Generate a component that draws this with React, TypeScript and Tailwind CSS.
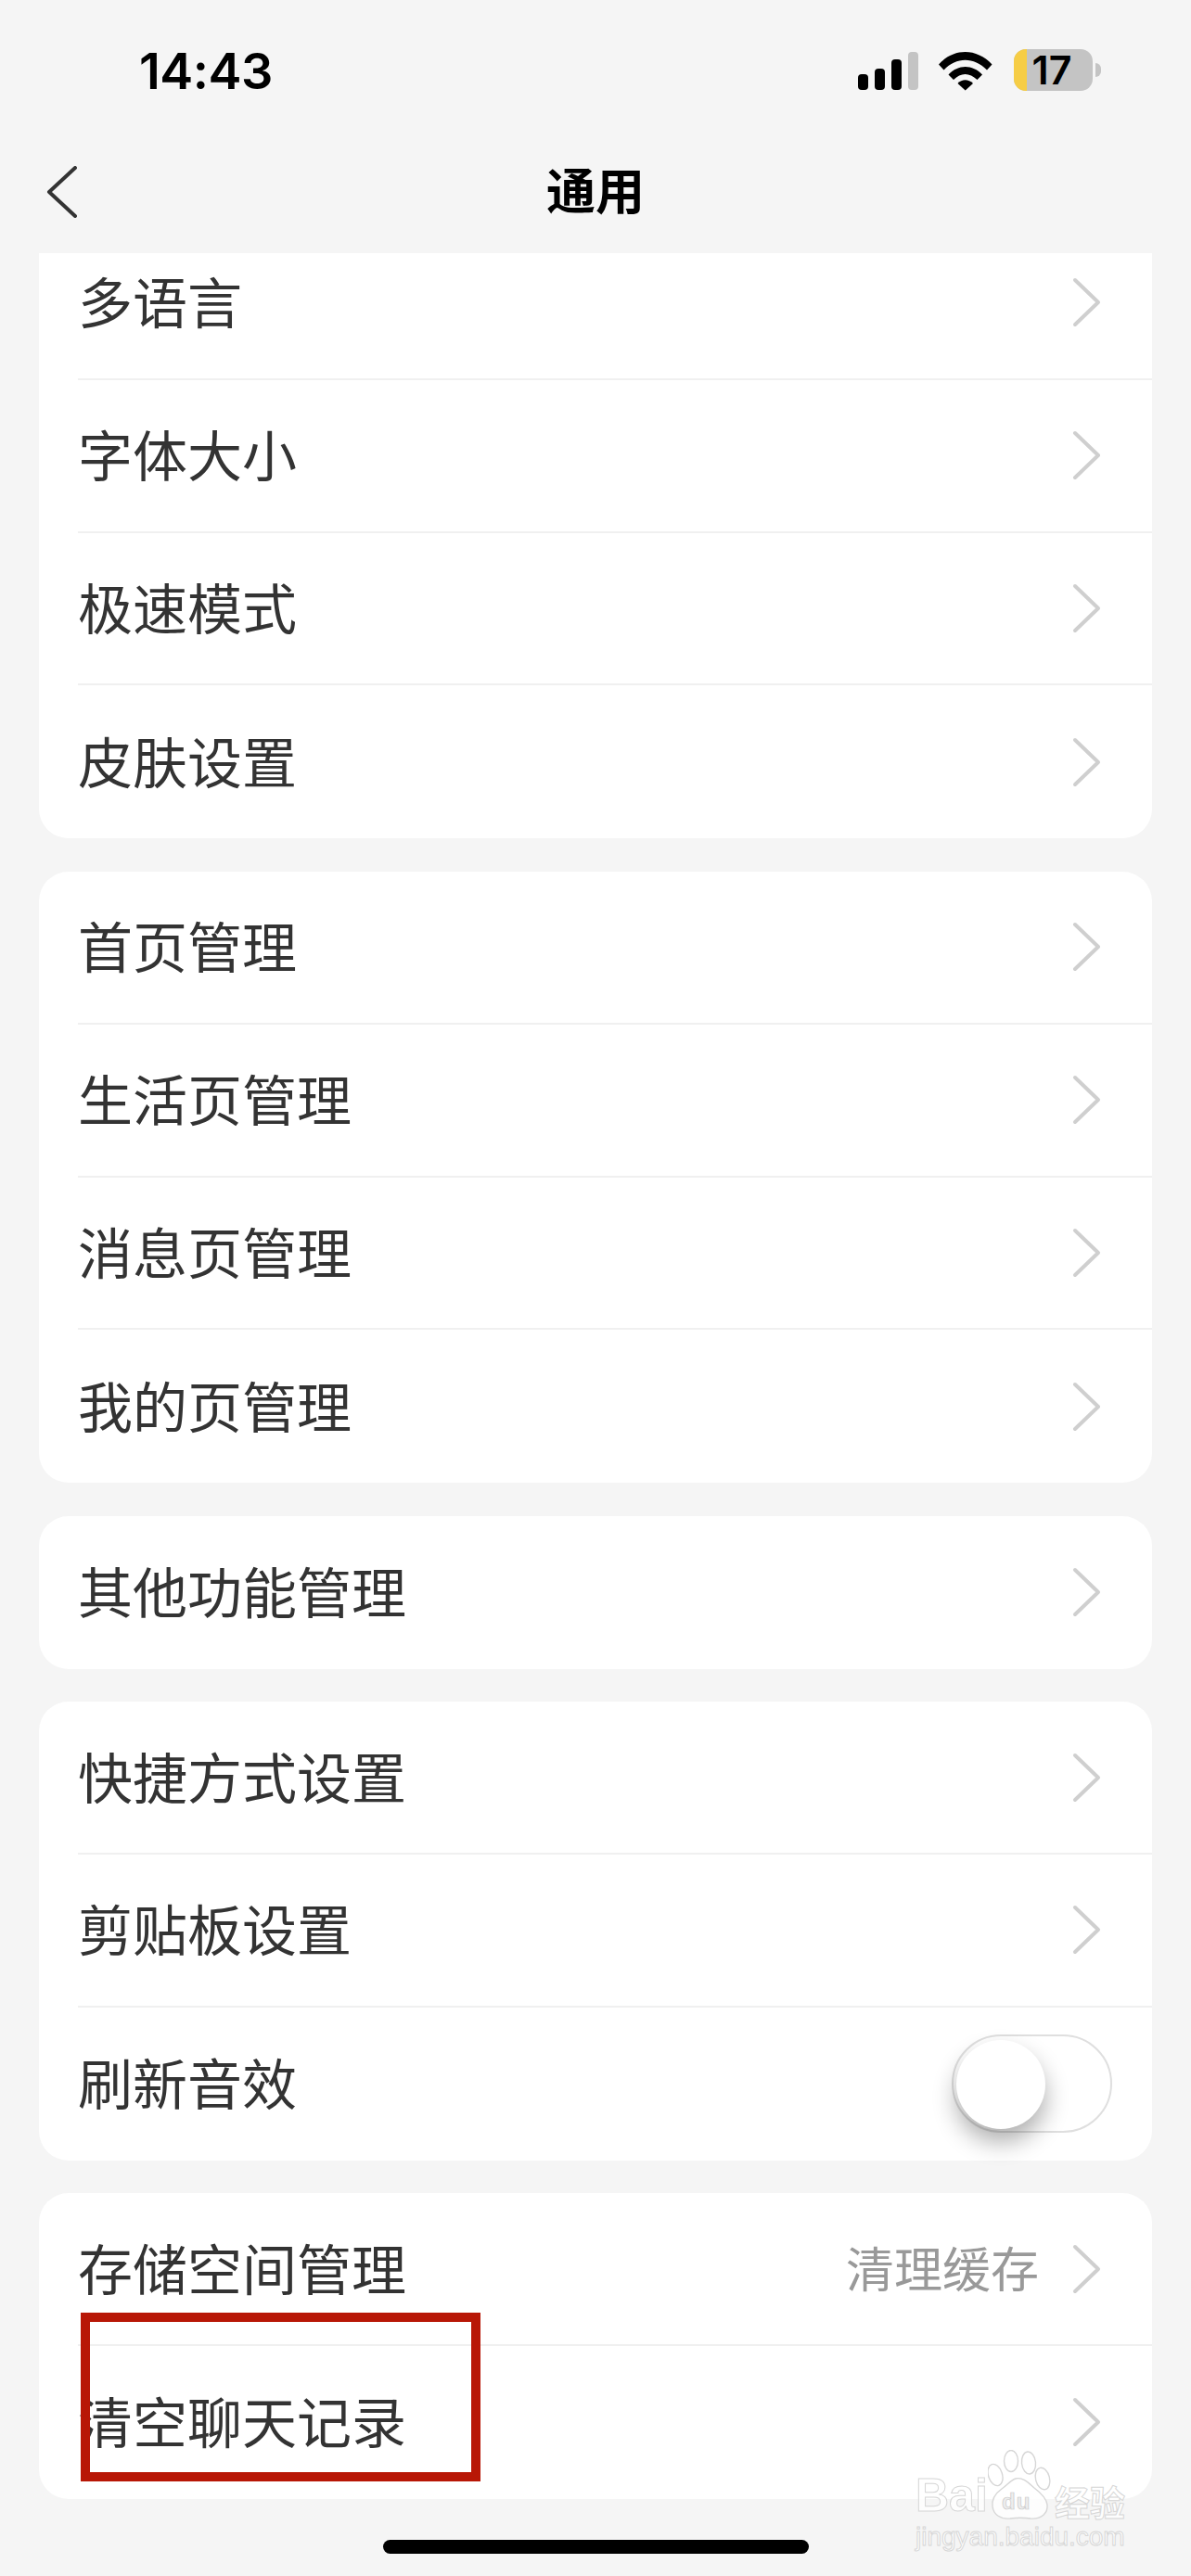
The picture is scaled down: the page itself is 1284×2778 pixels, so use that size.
const cjk = "font-['PingFang_SC','Noto_Sans_CJK_SC',sans-serif]";

function Chevron() {
  return (
    <svg width="33" height="56" viewBox="0 0 33 56" className="shrink-0">
      <path d="M4 4 L29 28 L4 52" fill="none" stroke="#cfcfcf" strokeWidth="4" strokeLinecap="round" strokeLinejoin="round" />
    </svg>
  );
}

function Toggle() {
  return (
    <div className="relative mr-[-11px] h-[106px] w-[173px] rounded-full border-2 border-[#dfdfdf] bg-white">
      <div className="absolute left-[3px] top-[4px] size-[96px] rounded-full bg-white shadow-[0_14px_26px_rgba(0,0,0,0.32)]" />
    </div>
  );
}

function Row({ label, value, toggle, last }: { label: string; value?: string; toggle?: boolean; last?: boolean }) {
  return (
    <div className={`ml-[42px] flex h-[164.8px] items-center pr-[54px] ${last ? "" : "border-b-2 border-[#f0f0f0]"}`}>
      <span className="flex-1 pb-[5px] text-[59px] leading-none font-normal text-[#333333]">{label}</span>
      {value && <span className="mr-[35px] pb-[4px] text-[52px] leading-none text-[#999999]">{value}</span>}
      {toggle ? <Toggle /> : <Chevron />}
    </div>
  );
}

function Card({ items, className = "" }: { items: { label: string; value?: string; toggle?: boolean }[]; className?: string }) {
  return (
    <div className={`rounded-[32px] bg-white ${className}`}>
      {items.map((it, i) => (
        <Row key={it.label} {...it} last={i === items.length - 1} />
      ))}
    </div>
  );
}

function StatusIcons() {
  return (
    <div className="flex items-end">
      <svg width="66" height="42" viewBox="0 0 66 42">
        <rect x="0" y="24" width="11" height="17" rx="4" fill="#000" />
        <rect x="18" y="18" width="11" height="23" rx="4" fill="#000" />
        <rect x="36" y="8" width="11" height="33" rx="4" fill="#000" />
        <rect x="54" y="0" width="11" height="41" rx="4" fill="#c4c4c4" />
      </svg>
      <svg width="58" height="43" viewBox="0 0 58 43" className="ml-[21px]">
        <path d="M0 14.5 C16 -3.5 41 -3.5 57.5 14.5 L52 20.5 C38 6 19 6 5.5 20.5 Z" fill="#000" />
        <path d="M10.5 25.5 C21 14 36.5 14 47 25.5 L41.5 31 C33 23 24 23 16 31 Z" fill="#000" />
        <path d="M20.5 35 C25 30 32 30 37 35 L28.7 42.5 Z" fill="#000" />
      </svg>
      <div className="relative ml-[23px] flex h-[45px] w-[85px] items-center justify-center rounded-[13px] bg-[#c4c4c4] pr-[3px]">
        <div className="absolute inset-y-0 left-0 w-[14px] rounded-l-[13px] bg-[#f6cd45]" />
        <span className="relative font-['Inter',sans-serif] text-[43px] leading-none font-semibold text-black">17</span>
      </div>
      <div className="mb-[15px] ml-[3px] h-[15px] w-[6px] rounded-r-full bg-[#c4c4c4]" />
    </div>
  );
}

function Paw() {
  return (
    <svg width="70" height="76" viewBox="0 0 70 76" className="shrink-0">
      <g fill="#ffffff" fillOpacity="0.75" stroke="#d6d6d6" strokeWidth="1.4">
        <ellipse cx="8" cy="27" rx="7.5" ry="12" transform="rotate(-18 8 27)" />
        <ellipse cx="25" cy="12" rx="7.5" ry="11.5" />
        <ellipse cx="44" cy="14" rx="7.5" ry="12" transform="rotate(-6 44 14)" />
        <ellipse cx="59" cy="31" rx="7.5" ry="12" transform="rotate(-14 59 31)" />
        <path d="M30 31 C24 33 21 38 15 42 C8 47 4 53 5 61 C6 70 14 75 24 74 C31 73 39 73 46 74 C58 75 65 68 64 59 C63 52 58 47 50 41 C44 36 38 29 30 31 Z" />
      </g>
      <text x="15" y="64" fontFamily="Liberation Sans, sans-serif" fontSize="24" fontWeight="700" fill="#ededed" stroke="#c9c9c9" strokeWidth="0.7" letterSpacing="1">du</text>
    </svg>
  );
}

function Watermark() {
  const outline = "[-webkit-text-stroke:1px_#d6d6d6] text-white/80";
  return (
    <div className="absolute left-[987px] top-[2642px] w-[232px]">
      <div className="flex items-end">
        <span className={`w-[78px] shrink-0 pb-[2px] font-['Liberation_Sans',sans-serif] text-[50px] leading-none font-bold ${outline}`}>Bai</span>
        <Paw />
        <span className={`ml-[2px] shrink-0 pb-[2px] ${cjk} text-[38px] leading-none font-bold ${outline}`}>经验</span>
      </div>
      <div className={`mt-[1px] font-['Liberation_Sans',sans-serif] text-[28px] leading-[34px] ${outline}`}>jingyan.baidu.com</div>
    </div>
  );
}

export default function App() {
  return (
    <div className={`relative h-[2778px] w-[1284px] overflow-hidden bg-[#f5f5f5] ${cjk}`}>
      <div className="flex h-[136px] items-start justify-between pr-[97px] pl-[150px] pt-[45px]">
        <span className="font-['Inter',sans-serif] text-[54px] leading-[64px] font-semibold tracking-[-0.5px] text-black">14:43</span>
        <div className="pt-[8px]">
          <StatusIcons />
        </div>
      </div>

      <div className="relative flex h-[137px] items-center justify-center">
        <svg width="33" height="56" viewBox="0 0 33 56" className="absolute left-[50px] top-[43px]">
          <path d="M31 2 L3 28 L31 54" fill="none" stroke="#333333" strokeWidth="4" strokeLinecap="round" strokeLinejoin="round" />
        </svg>
        <span className="pb-[3px] text-[53px] leading-none font-bold text-black">通用</span>
      </div>

      <div className="mx-[42px] flex flex-col gap-[35.6px]">
        <div className="h-[631.4px] overflow-hidden rounded-b-[32px] bg-white">
          <Card className="-mt-[28px]" items={[{ label: "多语言" }, { label: "字体大小" }, { label: "极速模式" }, { label: "皮肤设置" }]} />
        </div>
        <Card items={[{ label: "首页管理" }, { label: "生活页管理" }, { label: "消息页管理" }, { label: "我的页管理" }]} />
        <Card items={[{ label: "其他功能管理" }]} />
        <Card items={[{ label: "快捷方式设置" }, { label: "剪贴板设置" }, { label: "刷新音效", toggle: true }]} />
        <Card items={[{ label: "存储空间管理", value: "清理缓存" }, { label: "清空聊天记录" }]} />
      </div>

      <div className="absolute left-[87px] top-[2494px] h-[182px] w-[431px] border-[10px] border-[#b81706]" />
      <Watermark />
      <div className="absolute left-[413px] top-[2739px] h-[15px] w-[459px] rounded-full bg-black" />
    </div>
  );
}
